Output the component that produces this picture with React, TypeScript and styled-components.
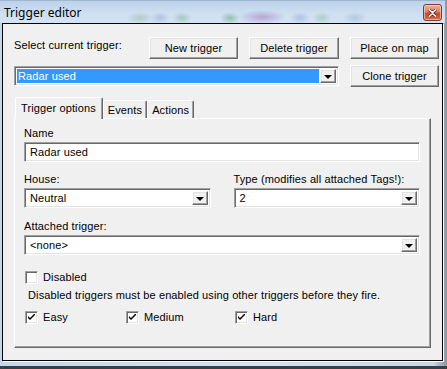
import * as React from 'react';
import styled, { createGlobalStyle, css } from 'styled-components';

const GlobalStyle = createGlobalStyle`
  html, body {
    margin: 0;
    padding: 0;
    background: #3b3e42;
  }
  body {
    font-family: "Liberation Sans", Arial, sans-serif;
    font-size: 11px;
    letter-spacing: 0.12px;
    color: #000;
  }
`

const raised = css`
  border-top: 1px solid #fff;
  border-left: 1px solid #fff;
  border-right: 1px solid #696969;
  border-bottom: 1px solid #696969;
  box-shadow: inset -1px -1px 0 #a0a0a0, inset 1px 1px 0 #e3e3e3;
`

const sunken = css`
  border-top: 1px solid #a0a0a0;
  border-left: 1px solid #a0a0a0;
  border-right: 1px solid #fff;
  border-bottom: 1px solid #fff;
  box-shadow: inset 1px 1px 0 #696969, inset -1px -1px 0 #e3e3e3;
`

const Window = styled.div`
  width: 447px;
  height: 366px;
  box-sizing: border-box;
  padding: 0 4px 5px 2px;
  display: flex;
  flex-direction: column;
  background: linear-gradient(to right, #c3d7ec 0%, #d2e2f3 60%, #c6d7e8 97%, #8d949b 100%);
`

const TitleBar = styled.div`
  height: 23px;
  display: flex;
  align-items: center;
  justify-content: space-between;
  margin-left: -2px;
  margin-right: -2px;
  padding: 0 2px 0 4px;
  box-sizing: border-box;
  border-top: 1px solid #9fb6cc;
  background:
    radial-gradient(ellipse 14px 6px at 140px 17px, rgba(120, 160, 120, 0.35), transparent),
    radial-gradient(ellipse 10px 6px at 160px 17px, rgba(120, 130, 200, 0.35), transparent),
    radial-gradient(ellipse 10px 6px at 182px 17px, rgba(80, 150, 100, 0.35), transparent),
    radial-gradient(ellipse 10px 6px at 230px 17px, rgba(60, 140, 80, 0.4), transparent),
    radial-gradient(ellipse 24px 7px at 262px 16px, rgba(150, 90, 170, 0.45), transparent),
    radial-gradient(ellipse 10px 6px at 300px 17px, rgba(110, 130, 200, 0.35), transparent),
    radial-gradient(ellipse 10px 6px at 322px 17px, rgba(110, 170, 110, 0.35), transparent),
    radial-gradient(ellipse 12px 6px at 355px 17px, rgba(130, 160, 200, 0.4), transparent),
    linear-gradient(to bottom, #bcd2ea, #cfe0f2 60%, #d4e3f3);
`

const Title = styled.span`
  font-family: "Noto Sans", "Open Sans", sans-serif;
  font-size: 12px;
  letter-spacing: 0;
  color: #000;
  padding-top: 1px;
`

const CloseButton = styled.div`
  width: 17px;
  height: 15px;
  margin-top: 1px;
  margin-right: 1px;
  display: flex;
  align-items: center;
  justify-content: center;
  border: 1px solid #7e3a2b;
  border-radius: 3px;
  background: linear-gradient(to bottom, #eab1a0 0%, #de8266 45%, #c9492c 55%, #d7694b 100%);
  box-shadow: inset 0 0 0 1px rgba(255, 220, 210, 0.6);
`

const Client = styled.div`
  height: 338px;
  box-sizing: border-box;
  border: 1px solid #000;
  box-shadow: 1px 1px 0 #fff;
  background: #f0f0f0;
  padding: 13px 11px 12px 11px;
  display: flex;
  flex-direction: column;
`

const TopGrid = styled.div`
  display: grid;
  grid-template-columns: 124px 89px 90px 89px;
  grid-template-rows: 22px 22px;
  column-gap: 11px;
  row-gap: 6px;
`

const TopLabel = styled.div`
  line-height: 14px;
  padding-top: 1px;
`

const Button = styled.div`
  ${raised};
  background: #f0f0f0;
  display: flex;
  align-items: center;
  justify-content: center;
  box-sizing: border-box;
  height: 22px;
  white-space: nowrap;
`

const ComboBox = styled.div<{ $span?: boolean }>`
  ${sunken};
  box-sizing: border-box;
  height: 20px;
  background: #fff;
  display: flex;
  align-items: stretch;
  padding: 2px;
  grid-column: ${p => (p.$span ? '1 / 4' : 'auto')};
  align-self: ${p => (p.$span ? 'start' : 'stretch')};
  margin-top: ${p => (p.$span ? '1px' : '0')};
`

const ComboValue = styled.div<{ $selected?: boolean }>`
  flex: 1;
  display: flex;
  align-items: center;
  padding-left: ${p => (p.$selected ? '1px' : '3px')};
  margin-right: 1px;
  background: ${p => (p.$selected ? '#3399ff' : 'transparent')};
  color: ${p => (p.$selected ? '#fff' : '#000')};
  white-space: nowrap;
  overflow: hidden;
`

const DropButton = styled.div`
  ${raised};
  width: 16px;
  box-sizing: border-box;
  background: #f0f0f0;
  display: flex;
  align-items: center;
  justify-content: center;
`

const Arrow = styled.div`
  width: 0;
  height: 0;
  border-left: 4px solid transparent;
  border-right: 4px solid transparent;
  border-top: 4px solid #000;
  margin-top: 1px;
`

const TabStrip = styled.div`
  display: flex;
  align-items: flex-end;
  margin-top: 10px;
  padding-left: 1px;
  height: 21px;
  position: relative;
  z-index: 1;
`

const Tab = styled.div<{ $active?: boolean }>`
  box-sizing: border-box;
  border-top: 1px solid #fff;
  border-left: 1px solid #fff;
  border-right: 1px solid #696969;
  box-shadow: inset -1px 0 0 #a0a0a0;
  border-radius: 2px 2px 0 0;
  background: #f0f0f0;
  display: flex;
  align-items: center;
  padding: ${p => (p.$active ? '0 6px 2px 5px' : '0 4px 0 4px')};
  height: ${p => (p.$active ? '22px' : '18px')};
  margin-bottom: ${p => (p.$active ? '-1px' : '0')};
  white-space: nowrap;
`

const Panel = styled.div`
  flex: 1;
  box-sizing: border-box;
  border-top: 1px solid #fff;
  border-left: 1px solid #fff;
  border-right: 1px solid #696969;
  border-bottom: 1px solid #696969;
  box-shadow: inset -1px -1px 0 #a0a0a0;
  padding: 7px 10px 0 9px;
  display: flex;
  flex-direction: column;
`

const FieldLabel = styled.div`
  line-height: 14px;
  margin-bottom: 2px;
  white-space: nowrap;
`

const FieldGroup = styled.div<{ $gap?: number }>`
  display: flex;
  flex-direction: column;
  margin-top: ${p => p.$gap ?? 0}px;
`

const TextInput = styled.div`
  ${sunken};
  box-sizing: border-box;
  height: 20px;
  background: #fff;
  display: flex;
  align-items: center;
  padding-left: 5px;
`

const TwoCols = styled.div`
  display: grid;
  grid-template-columns: 1fr 1fr;
  column-gap: 23px;
  margin-top: 10px;
`

const CheckRow = styled.div<{ $gap: number }>`
  display: flex;
  align-items: center;
  height: 14px;
  margin-top: ${p => p.$gap}px;
  margin-left: 1px;
`

const Note = styled.div`
  line-height: 14px;
  margin-top: 4px;
  margin-left: 4px;
  white-space: nowrap;
`

const DifficultyRow = styled.div`
  display: grid;
  grid-template-columns: 101px 109px auto;
  height: 14px;
  margin-top: 8px;
  margin-left: 1px;
`

const CheckItem = styled.div`
  display: flex;
  align-items: center;
`

const Box = styled.div`
  ${sunken};
  width: 13px;
  height: 13px;
  box-sizing: border-box;
  background: #fff;
  display: flex;
  align-items: center;
  justify-content: center;
  margin-right: 5px;
`

const Check = ({ checked, label }: { checked?: boolean; label: string }) => (
  <CheckItem>
    <Box>
      {checked ? (
        <svg width="7" height="7" viewBox="0 0 7 7">
          <path d="M0 2 L0 4 L2 6 L7 1 L7 -1 L2 4 Z" fill="#000" />
        </svg>
      ) : null}
    </Box>
    <span>{label}</span>
  </CheckItem>
)

const Combo = ({ value, selected, span }: { value: string; selected?: boolean; span?: boolean }) => (
  <ComboBox $span={span}>
    <ComboValue $selected={selected}>{value}</ComboValue>
    <DropButton>
      <Arrow />
    </DropButton>
  </ComboBox>
)

const App = () => {
  return (
    <>
      <GlobalStyle />
      <Window>
        <TitleBar>
          <Title>Trigger editor</Title>
          <CloseButton>
            <svg width="9" height="8" viewBox="0 0 9 8">
              <path
                d="M1 0.5 L4.5 3.5 L8 0.5 M1 7.5 L4.5 4.5 L8 7.5"
                stroke="#5b2a20"
                strokeWidth="3"
                fill="none"
              />
              <path
                d="M1 0.5 L4.5 3.5 L8 0.5 M1 7.5 L4.5 4.5 L8 7.5"
                stroke="#fff"
                strokeWidth="1.6"
                fill="none"
              />
            </svg>
          </CloseButton>
        </TitleBar>
        <Client>
          <TopGrid>
            <TopLabel>Select current trigger:</TopLabel>
            <Button>New trigger</Button>
            <Button>Delete trigger</Button>
            <Button>Place on map</Button>
            <Combo value="Radar used" selected span />
            <Button>Clone trigger</Button>
          </TopGrid>
          <TabStrip>
            <Tab $active>Trigger options</Tab>
            <Tab>Events</Tab>
            <Tab>Actions</Tab>
          </TabStrip>
          <Panel>
            <FieldGroup>
              <FieldLabel>Name</FieldLabel>
              <TextInput>Radar used</TextInput>
            </FieldGroup>
            <TwoCols>
              <FieldGroup>
                <FieldLabel>House:</FieldLabel>
                <Combo value="Neutral" />
              </FieldGroup>
              <FieldGroup>
                <FieldLabel>Type (modifies all attached Tags!):</FieldLabel>
                <Combo value="2" />
              </FieldGroup>
            </TwoCols>
            <FieldGroup $gap={11}>
              <FieldLabel>Attached trigger:</FieldLabel>
              <Combo value="<none>" />
            </FieldGroup>
            <CheckRow $gap={15}>
              <Check label="Disabled" />
            </CheckRow>
            <Note>Disabled triggers must be enabled using other triggers before they fire.</Note>
            <DifficultyRow>
              <Check checked label="Easy" />
              <Check checked label="Medium" />
              <Check checked label="Hard" />
            </DifficultyRow>
          </Panel>
        </Client>
      </Window>
    </>
  )
}

export default App
